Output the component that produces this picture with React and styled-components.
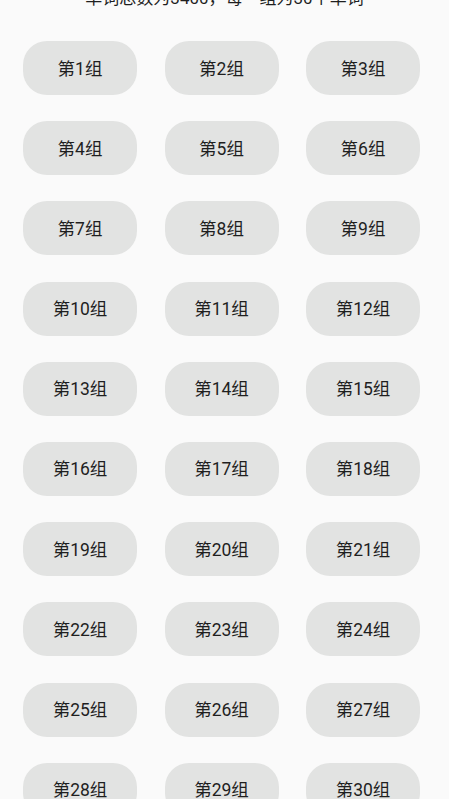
import React from "react";
import styled, { createGlobalStyle } from "styled-components";

const GlobalStyle = createGlobalStyle`
  html, body {
    margin: 0;
    padding: 0;
    background: #fafafa;
    font-family: Roboto, "Noto Sans CJK SC", sans-serif;
    overflow: hidden;
  }
`;

const Page = styled.div`
  width: 449px;
  height: 799px;
  overflow: hidden;
  background: #fafafa;
`;

const Summary = styled.div`
  margin-top: -14px;
  height: 24px;
  line-height: 24px;
  font-size: 17px;
  color: #1f1f1f;
  text-align: center;
  margin-bottom: 31px;
`;

const Grid = styled.div`
  display: grid;
  grid-template-columns: repeat(3, 114px);
  column-gap: 27.5px;
  row-gap: 26.2px;
  padding-left: 23px;
`;

const GroupButton = styled.div`
  box-sizing: border-box;
  height: 54px;
  padding-bottom: 2px;
  border-radius: 24px;
  background: #e2e3e2;
  color: #1f1f1f;
  font-size: 17.5px;
  display: flex;
  align-items: center;
  justify-content: center;
  user-select: none;
`;

const groups = Array.from({ length: 30 }, (_, i) => i + 1);

export default function App() {
  return (
    <Page>
      <GlobalStyle />
      <Summary>单词总数为3400，每一组为30个单词</Summary>
      <Grid>
        {groups.map((n) => (
          <GroupButton key={n}>第{n}组</GroupButton>
        ))}
      </Grid>
    </Page>
  );
}
